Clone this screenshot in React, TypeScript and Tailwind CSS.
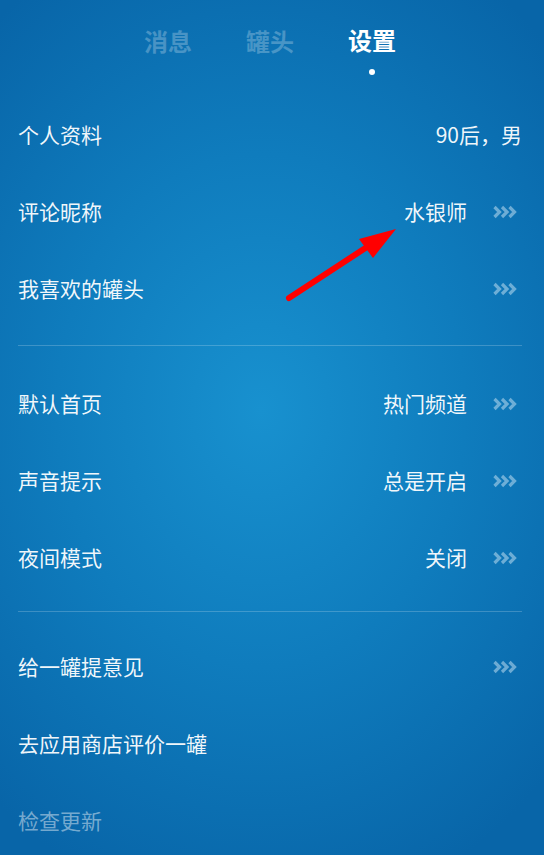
import React from 'react';

type Item = { label: string; value?: string; arrow?: boolean; dim?: boolean };

const sections: Item[][] = [
  [
    { label: '个人资料', value: '90后，男' },
    { label: '评论昵称', value: '水银师', arrow: true },
    { label: '我喜欢的罐头', arrow: true },
  ],
  [
    { label: '默认首页', value: '热门频道', arrow: true },
    { label: '声音提示', value: '总是开启', arrow: true },
    { label: '夜间模式', value: '关闭', arrow: true },
  ],
  [
    { label: '给一罐提意见', arrow: true },
    { label: '去应用商店评价一罐' },
    { label: '检查更新', dim: true },
  ],
];

function Chevrons() {
  return (
    <svg width="24" height="14" viewBox="0 0 24 14" className="ml-[26px] mr-[5px] shrink-0">
      <g fill="none" stroke="rgba(190,220,240,0.55)" strokeWidth="3.2" strokeLinejoin="miter">
        <polyline points="1.5,2 6.5,7 1.5,12" />
        <polyline points="9,2 14,7 9,12" />
        <polyline points="16.5,2 21.5,7 16.5,12" />
      </g>
    </svg>
  );
}

function Row({ item }: { item: Item }) {
  return (
    <div className="flex h-[77px] items-center justify-between">
      <span className={item.dim ? 'text-white/45' : 'text-white/95'}>{item.label}</span>
      <div className="flex items-center">
        {item.value && <span className="text-white/95">{item.value}</span>}
        {item.arrow && <Chevrons />}
      </div>
    </div>
  );
}

export default function App() {
  return (
    <div
      className="relative h-[855px] w-[544px] overflow-hidden bg-[radial-gradient(ellipse_75%_60%_at_48%_48%,#1891cf_0%,#0f7cbd_50%,#0865a8_100%)] text-[21px]"
      style={{ fontFamily: '"Noto Sans CJK SC", "Noto Sans", sans-serif' }}
    >
      <header className="flex h-[96px] justify-center gap-[54px] pt-[23px] pr-[4px] text-[24px] font-bold">
        <span className="text-white/25">消息</span>
        <span className="text-white/25">罐头</span>
        <div className="flex flex-col items-center">
          <span className="leading-[34px] text-white">设置</span>
          <span className="mt-[12px] h-[6px] w-[6px] rounded-full bg-white" />
        </div>
      </header>

      <main className="pl-[18px] pr-[22px]">
        {sections.map((rows, i) => (
          <div key={i}>
            {i > 0 && <div className={`h-px bg-white/20 ${i === 1 ? 'mt-[18px] mb-[19px]' : 'mt-[15px] mb-[16px]'}`} />}
            {rows.map((r) => (
              <Row key={r.label} item={r} />
            ))}
          </div>
        ))}
      </main>

      <svg className="absolute left-0 top-0" width="544" height="855" viewBox="0 0 544 855">
        <line x1="289" y1="298" x2="370" y2="245" stroke="#ff0000" strokeWidth="6" strokeLinecap="round" />
        <polygon points="396,229 359,239 373,258" fill="#ff0000" />
      </svg>
    </div>
  );
}
